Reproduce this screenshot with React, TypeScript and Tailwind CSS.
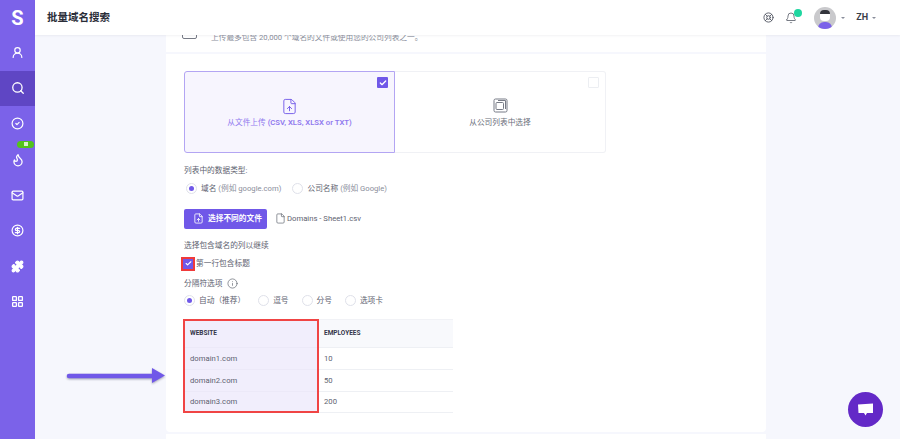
import {
  Bell,
  Check,
  CircleCheck,
  CircleDollarSign,
  File,
  FileUp,
  Flame,
  Info,
  LayoutGrid,
  LifeBuoy,
  Mail,
  Puzzle,
  Search,
  UserRound,
} from "lucide-react";

const font = "font-['Roboto','Noto_Sans_CJK_SC',sans-serif]";

const Radio = ({ on, label, note }: { on?: boolean; label: string; note?: string }) => (
  <div className="flex items-center gap-[4px]">
    <span className="flex h-[11px] w-[11px] items-center justify-center rounded-full border border-[#dfe1ea] bg-white">
      {on && <span className="h-[5px] w-[5px] rounded-full bg-[#7058e8]" />}
    </span>
    <span className="text-[7.7px] text-[#5e6270]">
      {label}
      {note && <span className="text-[#8a8e9b]"> {note}</span>}
    </span>
  </div>
);

const Page = () => {
  const nav = [
    { icon: <UserRound size={13} strokeWidth={2.2} /> },
    { icon: <Search size={14} strokeWidth={2.2} />, active: true },
    { icon: <CircleCheck size={13} strokeWidth={2.2} /> },
    { icon: <Flame size={14} strokeWidth={2.2} />, badge: true },
    { icon: <Mail size={13} strokeWidth={2.2} /> },
    { icon: <CircleDollarSign size={13} strokeWidth={2.2} /> },
    { icon: <Puzzle size={13} fill="white" strokeWidth={2} /> },
    { icon: <LayoutGrid size={13} strokeWidth={2.4} /> },
  ];

  return (
    <div className={`${font} relative flex h-screen overflow-hidden bg-[#f6f7fd]`}>
      {/* Sidebar */}
      <aside className="flex w-[35px] shrink-0 flex-col bg-[#7b62e9] text-white">
        <div className="flex h-[35px] items-center justify-center text-[20px] leading-none font-bold">S</div>
        {nav.map((item, i) => (
          <div
            key={i}
            className={`relative flex h-[35.6px] items-center justify-center ${item.active ? "bg-[#5f46c4]" : ""}`}
          >
            {item.icon}
            {item.badge && (
              <span className="absolute top-[-1px] left-[17px] flex h-[7px] w-[17px] items-center justify-center rounded-full bg-[#52c41a]">
                <span className="h-[4px] w-[4px] bg-[#d9f5c8]" />
              </span>
            )}
          </div>
        ))}
      </aside>

      <div className="flex min-w-0 flex-1 flex-col">
        {/* Header */}
        <header className="relative z-10 flex h-[35px] shrink-0 items-center bg-white pr-[24px] pl-[12px] shadow-[0_1px_2px_rgba(30,30,60,0.06)]">
          <h1 className="text-[10.5px] font-semibold text-[#2a2d38]">批量域名搜索</h1>
          <div className="ml-auto flex items-center text-[#555a66]">
            <LifeBuoy size={11} strokeWidth={2} />
            <div className="relative ml-[11px]">
              <Bell size={12} strokeWidth={1.6} />
              <span className="absolute top-[-3px] left-[9px] h-[8px] w-[8px] rounded-full bg-[#1fd6a0]" />
            </div>
            <div className="relative ml-[17px] h-[22px] w-[22px] overflow-hidden rounded-full bg-[#c9c9cc]">
              <span className="absolute top-[4px] left-[6px] h-[10px] w-[10px] rounded-[4px] bg-white" />
              <span className="absolute top-[3px] left-[6px] h-[4px] w-[10px] rounded-t-[4px] bg-[#33343c]" />
              <span className="absolute top-[15px] left-[4px] h-[9px] w-[14px] rounded-t-[6px] bg-[#7b62e9]" />
            </div>
            <span className="ml-[5px] h-0 w-0 border-x-[2px] border-t-[2px] border-x-transparent border-t-[#8a8e9b]" />
            <span className="ml-[11px] text-[9px] font-bold text-[#3a3d48]">ZH</span>
            <span className="ml-[4px] h-0 w-0 border-x-[2px] border-t-[2px] border-x-transparent border-t-[#8a8e9b]" />
          </div>
        </header>

        {/* Content */}
        <main className="ml-[131px] flex w-[600px] flex-col gap-[2px]">
          <div className="flex h-[17px] overflow-hidden bg-white pl-[16px]">
            <div className="mt-[-6px] h-[10px] w-[15px] rounded-[2px] border border-[#777b86]" />
            <p className="mt-[-3px] ml-[14px] text-[7.7px] leading-[12px] text-[#8a8e9b]">上传最多包含 20,000 个域名的文件或使用您的公司列表之一。</p>
          </div>

          <div className="h-[378px] rounded-b-[4px] bg-white pt-[17px] pl-[18px]">
            {/* Source choice */}
            <div className="flex h-[82px] w-[422px]">
              <div className="relative flex w-[211px] flex-col items-center justify-center rounded-l-[3px] border border-[#b3a5f3] bg-[#f7f5fe] pt-[2px]">
                <span className="absolute top-[5px] right-[6px] flex h-[11px] w-[11px] items-center justify-center rounded-[1px] bg-[#7058e8] text-white">
                  <Check size={8} strokeWidth={4} />
                </span>
                <FileUp size={17} strokeWidth={1.3} className="text-[#7058e8]" />
                <span className="mt-[1px] text-[7.7px] leading-[13px] text-[#9079ee]">
                  从文件上传 <span className="font-semibold">(CSV, XLS, XLSX or TXT)</span>
                </span>
              </div>
              <div className="relative flex w-[211px] flex-col items-center justify-center rounded-r-[3px] border border-l-0 border-[#f0f1f5] pt-[2px]">
                <span className="absolute top-[5px] right-[6px] h-[11px] w-[11px] rounded-[1px] border border-[#eceef2]" />
                <svg width="15" height="15" viewBox="0 0 15 15" fill="none" stroke="#777b86" strokeWidth="1">
                  <rect x="1" y="1" width="13" height="13" rx="1.5" />
                  <rect x="3" y="4.500" width="7.500" height="7" rx="1" />
                  <path d="M5 2.500h7.500V11" />
                </svg>
                <span className="mt-[3px] text-[7.7px] leading-[13px] text-[#6b6f7b]">从公司列表中选择</span>
              </div>
            </div>

            <p className="mt-[11px] text-[7.7px] leading-[13px] text-[#5e6270]">列表中的数据类型:</p>
            <div className="mt-[6px] flex items-center gap-[11px] pl-[2px]">
              <Radio on label="域名" note="(例如 google.com)" />
              <Radio label="公司名称" note="(例如 Google)" />
            </div>

            <div className="mt-[14px] flex items-center">
              <button className="flex h-[20px] w-[83px] items-center gap-[4px] rounded-[2px] bg-[#7058e8] pl-[9px] text-[7.7px] font-bold text-white">
                <FileUp size={11} strokeWidth={1.8} />
                选择不同的文件
              </button>
              <File size={11} strokeWidth={1.4} className="ml-[8px] text-[#555a66]" />
              <span className="ml-[1px] text-[7.7px] text-[#5e6270]">Domains - Sheet1.csv</span>
            </div>

            <p className="mt-[10px] text-[7.7px] leading-[13px] text-[#5e6270]">选择包含域名的列以继续</p>
            <div className="mt-[5px] flex items-center">
              <span className="ml-[-3px] flex h-[14px] w-[14px] items-center justify-center border-2 border-[#f03a3a] bg-[#7058e8] text-white">
                <Check size={7} strokeWidth={4} />
              </span>
              <span className="ml-[1px] text-[7.7px] text-[#5e6270]">第一行包含标题</span>
            </div>
            <div className="mt-[6px] flex items-center">
              <span className="text-[7.7px] leading-[13px] text-[#5e6270]">分隔符选项</span>
              <Info size={11} strokeWidth={1.4} className="ml-[5px] text-[#555a66]" />
            </div>
            <div className="mt-[5px] flex items-center gap-[13px]">
              <Radio on label="自动（推荐）" />
              <Radio label="逗号" />
              <Radio label="分号" />
              <Radio label="选项卡" />
            </div>

            {/* Preview table */}
            <div className="mt-[13px] ml-[-1px] flex w-[270px]">
              <div className="h-[94px] w-[136px] border-2 border-[#f04444] bg-[#f1eefc]">
                <div className="flex h-[26px] items-center pl-[5px] text-[6.5px] font-bold text-[#34364a]">WEBSITE</div>
                <div className="flex h-[22px] items-center border-t border-[#ece9f8] pl-[5px] text-[7.7px] text-[#5e6270]">domain1.com</div>
                <div className="flex h-[22px] items-center border-t border-[#ece9f8] pl-[5px] text-[7.7px] text-[#5e6270]">domain2.com</div>
                <div className="flex h-[20px] items-center border-t border-[#ece9f8] pl-[5px] text-[7.7px] text-[#5e6270]">domain3.com</div>
              </div>
              <div className="h-[94px] w-[134px] text-[#5e6270]">
                <div className="flex h-[28px] items-center border-t border-[#f1f2f6] bg-[#f8f9fc] pl-[5px] text-[6.5px] font-bold text-[#34364a]">EMPLOYEES</div>
                <div className="flex h-[22px] items-center border-t border-[#eef0f4] pl-[5px] text-[7.7px]">10</div>
                <div className="flex h-[22px] items-center border-t border-[#eef0f4] pl-[5px] text-[7.7px]">50</div>
                <div className="flex h-[22px] items-center border-y border-[#eef0f4] pl-[5px] text-[7.7px]">200</div>
              </div>
            </div>
          </div>

          <div className="h-[20px] bg-white" />
        </main>
      </div>

      {/* Annotation arrow */}
      <svg className="absolute top-[364px] left-[63px] drop-shadow-[0_1px_1px_rgba(60,60,90,0.45)]" width="106" height="24" viewBox="0 0 106 24">
        <path d="M6 12h85" stroke="#7058e8" strokeWidth="4.500" strokeLinecap="round" />
        <path d="M89 4l13 7.500-13 7.500z" fill="#7058e8" />
      </svg>

      {/* Chat bubble */}
      <div className="absolute top-[392px] left-[848px] flex h-[35px] w-[35px] items-center justify-center rounded-full bg-[#6329c7]">
        <svg width="17" height="14" viewBox="0 0 17 14" fill="white">
          <path d="M1 1.500l15-1v9.500h-6l-1.500 2.500-1.500-2.500h-5.500z" />
        </svg>
      </div>
    </div>
  );
};

export default Page;
